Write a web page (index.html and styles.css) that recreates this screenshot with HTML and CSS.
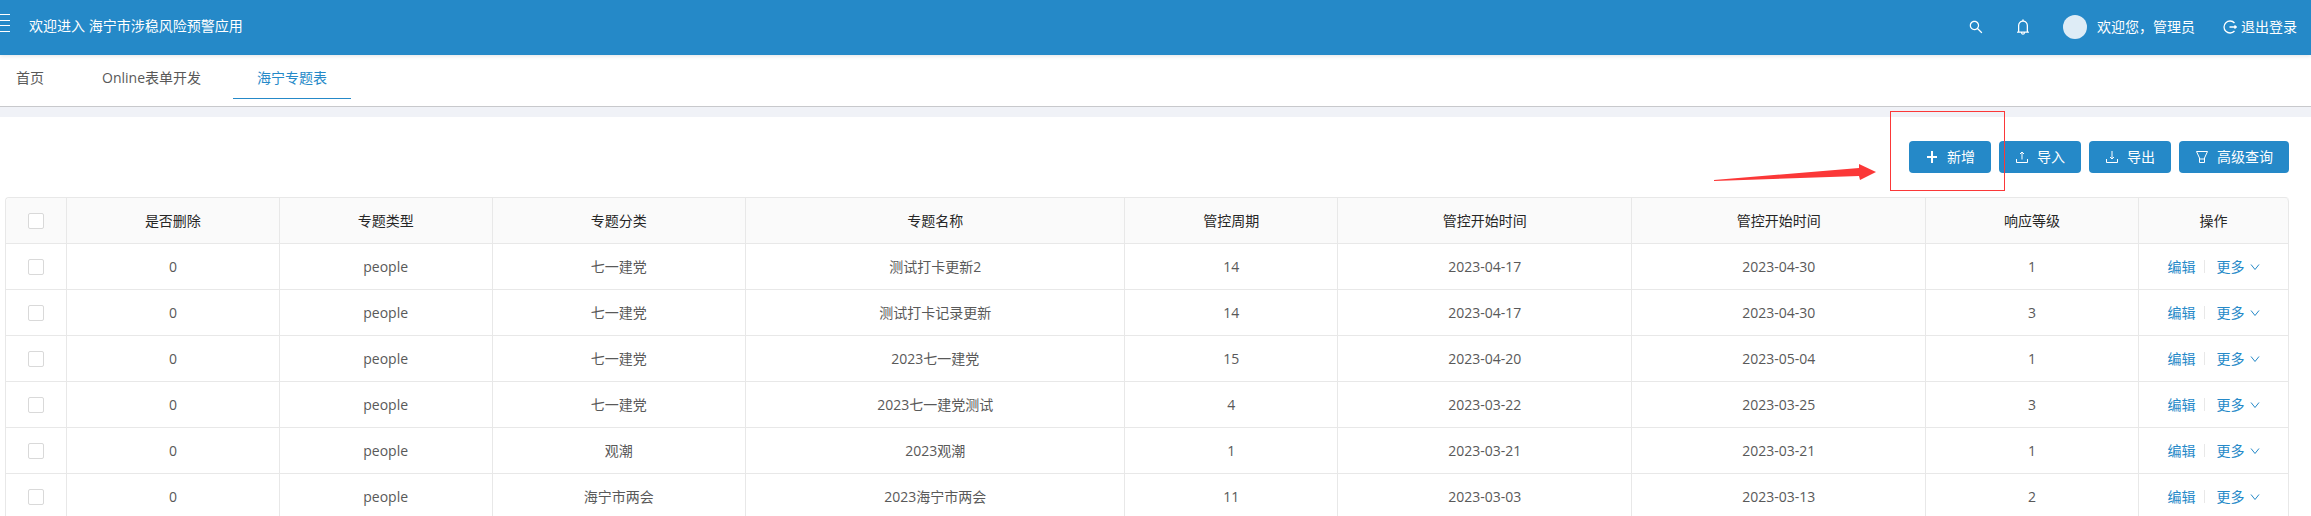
FILE: index.html
```html
<!DOCTYPE html>
<html lang="zh-CN">
<head>
<meta charset="utf-8">
<title>海宁市涉稳风险预警应用</title>
<link rel="stylesheet" href="styles.css">
</head>
<body>
<svg class="sprite" aria-hidden="true">
  <symbol id="search" viewBox="64 64 896 896"><path d="M909.6 854.5L649.9 594.8C690.2 542.7 712 479 712 412c0-80.2-31.3-155.4-87.9-212.1-56.6-56.7-132-87.9-212.1-87.9s-155.5 31.3-212.1 87.9C143.2 256.5 112 331.8 112 412c0 80.1 31.3 155.5 87.9 212.1C256.5 680.8 331.8 712 412 712c67 0 130.6-21.8 182.7-62l259.7 259.6a8.2 8.2 0 0 0 11.6 0l43.6-43.5a8.2 8.2 0 0 0 0-11.6zM570.4 570.4C528 612.7 471.8 636 412 636s-116-23.3-158.4-65.6C211.3 528 188 471.8 188 412s23.3-116.1 65.6-158.4C296 211.3 352.2 188 412 188s116.1 23.2 158.4 65.6S636 352.2 636 412s-23.3 116.1-65.6 158.4z"/></symbol>
  <symbol id="bell" viewBox="64 64 896 896"><path d="M816 768h-24V428c0-141.1-104.3-257.8-240-277.2V112c0-22.1-17.9-40-40-40s-40 17.9-40 40v38.8C336.3 170.2 232 286.9 232 428v340h-24c-17.7 0-32 14.3-32 32v32c0 4.4 3.6 8 8 8h216c0 61.8 50.2 112 112 112s112-50.2 112-112h216c4.4 0 8-3.6 8-8v-32c0-17.7-14.3-32-32-32zM512 888c-26.5 0-48-21.5-48-48h96c0 26.5-21.5 48-48 48zM304 768V428c0-55.6 21.6-107.8 60.9-147.1S456.4 220 512 220c55.6 0 107.8 21.6 147.1 60.9S720 372.4 720 428v340H304z"/></symbol>
  <symbol id="logout" viewBox="0 0 14 14"><path class="line medium" d="M11.500 3A6 6 0 1 0 11.500 11M6.500 7H13M11.500 5.500L13.300 7L11.500 8.500"/></symbol>
  <symbol id="plus" viewBox="0 0 14 14"><path class="line bold" d="M7 1v12M2 7h10"/></symbol>
  <symbol id="upload" viewBox="0 0 14 14"><path class="line" d="M1.500 9v3.500h11V9M7 9.500V2.500M5 4l2-2l2 2"/></symbol>
  <symbol id="download" viewBox="0 0 14 14"><path class="line" d="M1.500 9v3.500h11V9M7 1v7.500M5 7l2 2l2-2"/></symbol>
  <symbol id="filter" viewBox="0 0 14 14"><path class="line" d="M1.500 1.500h11L9.500 8v4.500h-5V8zM4.500 9h5"/></symbol>
  <symbol id="down" viewBox="0 0 10 10"><path class="line" d="M1 2.500L5 7.500L9 2.500"/></symbol>
</svg>

<header class="topbar">
  <button class="menu-toggle" type="button" aria-label="菜单">
    <svg viewBox="0 0 10 18"><path d="M0 .5h10M0 6.500h10M0 11.500h10M0 17.500h10"/></svg>
  </button>
  <h1 class="app-title">欢迎进入 海宁市涉稳风险预警应用</h1>
  <div class="user-tools">
    <button class="tool" type="button" aria-label="搜索"><svg class="icon"><use href="#search"/></svg></button>
    <button class="tool" type="button" aria-label="通知"><svg class="icon icon-bell"><use href="#bell"/></svg></button>
    <button class="tool user" type="button"><span class="avatar"></span>欢迎您，管理员</button>
    <a class="tool logout" href="#"><svg class="icon"><use href="#logout"/></svg>退出登录</a>
  </div>
</header>

<nav class="tabs">
  <a class="tab" href="#">首页</a>
  <a class="tab" href="#">Online表单开发</a>
  <a class="tab active" href="#" aria-current="page">海宁专题表</a>
</nav>

<main class="content">
  <div class="toolbar">
    <div class="add-wrap">
      <button class="btn" type="button"><svg class="icon"><use href="#plus"/></svg>新增</button>
      <svg class="pointer" viewBox="0 0 162 16" aria-hidden="true"><path d="M0 16L145 4V0L162 8L146 16L145 12L0 17z"/></svg>
      <div class="highlight"></div>
    </div>
    <button class="btn" type="button"><svg class="icon"><use href="#upload"/></svg>导入</button>
    <button class="btn" type="button"><svg class="icon"><use href="#download"/></svg>导出</button>
    <button class="btn" type="button"><svg class="icon"><use href="#filter"/></svg>高级查询</button>
  </div>

  <table class="grid">
    <colgroup>
      <col class="c-check"><col class="c-small"><col class="c-small"><col class="c-class"><col class="c-name"><col class="c-small"><col class="c-date"><col class="c-date"><col class="c-small"><col class="c-action">
    </colgroup>
    <thead>
      <tr><th><input type="checkbox" aria-label="全选"></th><th>是否删除</th><th>专题类型</th><th>专题分类</th><th>专题名称</th><th>管控周期</th><th>管控开始时间</th><th>管控开始时间</th><th>响应等级</th><th>操作</th></tr>
    </thead>
    <tbody>
      <tr><td><input type="checkbox" aria-label="选择"></td><td>0</td><td>people</td><td>七一建党</td><td>测试打卡更新2</td><td>14</td><td>2023-04-17</td><td>2023-04-30</td><td>1</td><td><div class="actions"><a href="#">编辑</a><span class="divider"></span><a class="more" href="#">更多<svg class="chevron"><use href="#down"/></svg></a></div></td></tr>
      <tr><td><input type="checkbox" aria-label="选择"></td><td>0</td><td>people</td><td>七一建党</td><td>测试打卡记录更新</td><td>14</td><td>2023-04-17</td><td>2023-04-30</td><td>3</td><td><div class="actions"><a href="#">编辑</a><span class="divider"></span><a class="more" href="#">更多<svg class="chevron"><use href="#down"/></svg></a></div></td></tr>
      <tr><td><input type="checkbox" aria-label="选择"></td><td>0</td><td>people</td><td>七一建党</td><td>2023七一建党</td><td>15</td><td>2023-04-20</td><td>2023-05-04</td><td>1</td><td><div class="actions"><a href="#">编辑</a><span class="divider"></span><a class="more" href="#">更多<svg class="chevron"><use href="#down"/></svg></a></div></td></tr>
      <tr><td><input type="checkbox" aria-label="选择"></td><td>0</td><td>people</td><td>七一建党</td><td>2023七一建党测试</td><td>4</td><td>2023-03-22</td><td>2023-03-25</td><td>3</td><td><div class="actions"><a href="#">编辑</a><span class="divider"></span><a class="more" href="#">更多<svg class="chevron"><use href="#down"/></svg></a></div></td></tr>
      <tr><td><input type="checkbox" aria-label="选择"></td><td>0</td><td>people</td><td>观潮</td><td>2023观潮</td><td>1</td><td>2023-03-21</td><td>2023-03-21</td><td>1</td><td><div class="actions"><a href="#">编辑</a><span class="divider"></span><a class="more" href="#">更多<svg class="chevron"><use href="#down"/></svg></a></div></td></tr>
      <tr><td><input type="checkbox" aria-label="选择"></td><td>0</td><td>people</td><td>海宁市两会</td><td>2023海宁市两会</td><td>11</td><td>2023-03-03</td><td>2023-03-13</td><td>2</td><td><div class="actions"><a href="#">编辑</a><span class="divider"></span><a class="more" href="#">更多<svg class="chevron"><use href="#down"/></svg></a></div></td></tr>
    </tbody>
  </table>
</main>
</body>
</html>
```
FILE: styles.css
```css
* { box-sizing: border-box; }

html { overflow: hidden; }

body {
  margin: 0;
  background: #fff;
  color: #595959;
  font: 14px/22px "Open Sans", "Noto Sans CJK SC", sans-serif;
}

a { color: #2589c8; text-decoration: none; }

button {
  font: inherit;
  color: inherit;
  border: 0;
  padding: 0;
  background: none;
  cursor: pointer;
}

.sprite { position: absolute; width: 0; height: 0; }

.line { fill: none; stroke: currentColor; stroke-width: 1; }
.medium { stroke-width: 1.3; }
.bold { stroke-width: 2; }

.icon { width: 14px; height: 14px; fill: currentColor; flex: none; }
.icon-bell { width: 16px; height: 16px; }

.topbar {
  position: relative;
  display: flex;
  align-items: center;
  height: 55px;
  padding-bottom: 2px;
  background: #2589c8;
  color: #fff;
  box-shadow: 0 1px 4px rgba(0, 21, 41, 0.12);
}

.menu-toggle { width: 10px; height: 18px; margin-bottom: 7px; }
.menu-toggle svg { display: block; width: 10px; height: 18px; }
.menu-toggle path { stroke: #fff; stroke-width: 1; }

.app-title { margin: 0 0 2px 19px; font-size: 14px; font-weight: 400; }

.user-tools { display: flex; align-items: center; margin-left: auto; padding-right: 14px; }
.tool { display: flex; align-items: center; color: #fff; }
.tool + .tool { margin-left: 32px; }
.tool.user { gap: 10px; }
.tool + .tool.logout { gap: 4px; margin-left: 28px; }

.avatar { width: 24px; height: 24px; border-radius: 50%; background: #deecf6; }

.tabs {
  display: flex;
  gap: 8px;
  height: 52px;
  border-bottom: 1px solid #c8c9cc;
}
.tab {
  height: 44px;
  padding: 12px 24px 0;
  color: #595959;
}
.tab:first-child { padding: 12px 26px 0 16px; }
.tab.active { color: #2589c8; border-bottom: 1px solid #2589c8; }

.content { border-top: 10px solid #f0f2f7; padding: 24px 22px 0 5px; }

.toolbar { display: flex; justify-content: flex-end; gap: 8px; margin-bottom: 24px; }

.btn {
  display: flex;
  align-items: center;
  gap: 8px;
  height: 32px;
  padding: 0 16px;
  border-radius: 4px;
  background: #2589c8;
  color: #fff;
}

.add-wrap { position: relative; z-index: 1; }
.highlight {
  position: absolute;
  left: -19px;
  top: -30px;
  width: 115px;
  height: 80px;
  border: 1px solid #fb3838;
  pointer-events: none;
}
.pointer {
  position: absolute;
  left: -195px;
  top: 23px;
  width: 162px;
  height: 16px;
  overflow: visible;
  fill: #fb3838;
}

.grid {
  width: 100%;
  table-layout: fixed;
  border-collapse: separate;
  border-spacing: 0;
  border: solid #e8e8e8;
  border-width: 1px 0 0 1px;
  border-radius: 4px 4px 0 0;
}
.c-check { width: 61px; }
.c-small { width: 9.32%; }
.c-class { width: 11.1%; }
.c-date { width: 12.88%; }
.c-action { width: 150px; }

.grid th, .grid td {
  height: 46px;
  padding: 0;
  text-align: center;
  font-weight: 400;
  border: solid #e8e8e8;
  border-width: 0 1px 1px 0;
}
.grid th { background: #fafafa; color: #262626; }
.grid th:first-child { border-top-left-radius: 4px; }
.grid th:last-child { border-top-right-radius: 4px; }

.grid input {
  appearance: none;
  display: block;
  width: 16px;
  height: 16px;
  margin: 0 auto;
  border: 1px solid #d9d9d9;
  border-radius: 2px;
  background: #fff;
}

.actions { display: flex; align-items: center; justify-content: center; }
.divider { width: 1px; height: 13px; margin: 0 12px 0 8px; background: #e8e8e8; }
.more { display: flex; align-items: center; gap: 5px; }
.chevron { width: 10px; height: 10px; }
```
